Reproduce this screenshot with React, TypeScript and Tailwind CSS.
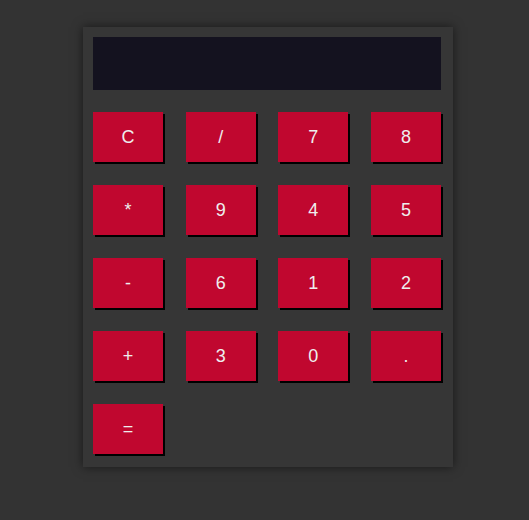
import React from 'react';

const keys = ['C', '/', '7', '8', '*', '9', '4', '5', '-', '6', '1', '2', '+', '3', '0', '.', '='];

export default function App() {
  const [value, setValue] = React.useState('');

  const press = (k: string) => {
    if (k === 'C') return setValue('');
    if (k === '=') {
      try {
        // eslint-disable-next-line no-new-func
        setValue(String(Function(`return (${value})`)()));
      } catch {
        setValue('Error');
      }
      return;
    }
    setValue((v) => v + k);
  };

  return (
    <div className="min-h-screen w-full bg-[#333333] pt-[27px] pl-[83px] font-['Liberation_Sans',Arial,sans-serif]">
      <div className="w-[370px] h-[440px] bg-[#363636] shadow-[0_0_10px_rgba(0,0,0,0.55)] pt-[10px] pl-[10px]">
        <div className="w-[348px] h-[53px] bg-[#14121f] text-white text-2xl text-right px-3 leading-[53px] overflow-hidden">
          {value}
        </div>
        <div className="mt-[22px] w-[348px] grid grid-cols-[repeat(4,70px)] justify-between gap-y-[23px]">
          {keys.map((k) => (
            <button
              key={k}
              onClick={() => press(k)}
              className="w-[70px] h-[50px] bg-[#c0072f] text-[#eeeeee] text-lg shadow-[2px_2px_0_#000] cursor-pointer"
            >
              {k}
            </button>
          ))}
        </div>
      </div>
    </div>
  );
}
